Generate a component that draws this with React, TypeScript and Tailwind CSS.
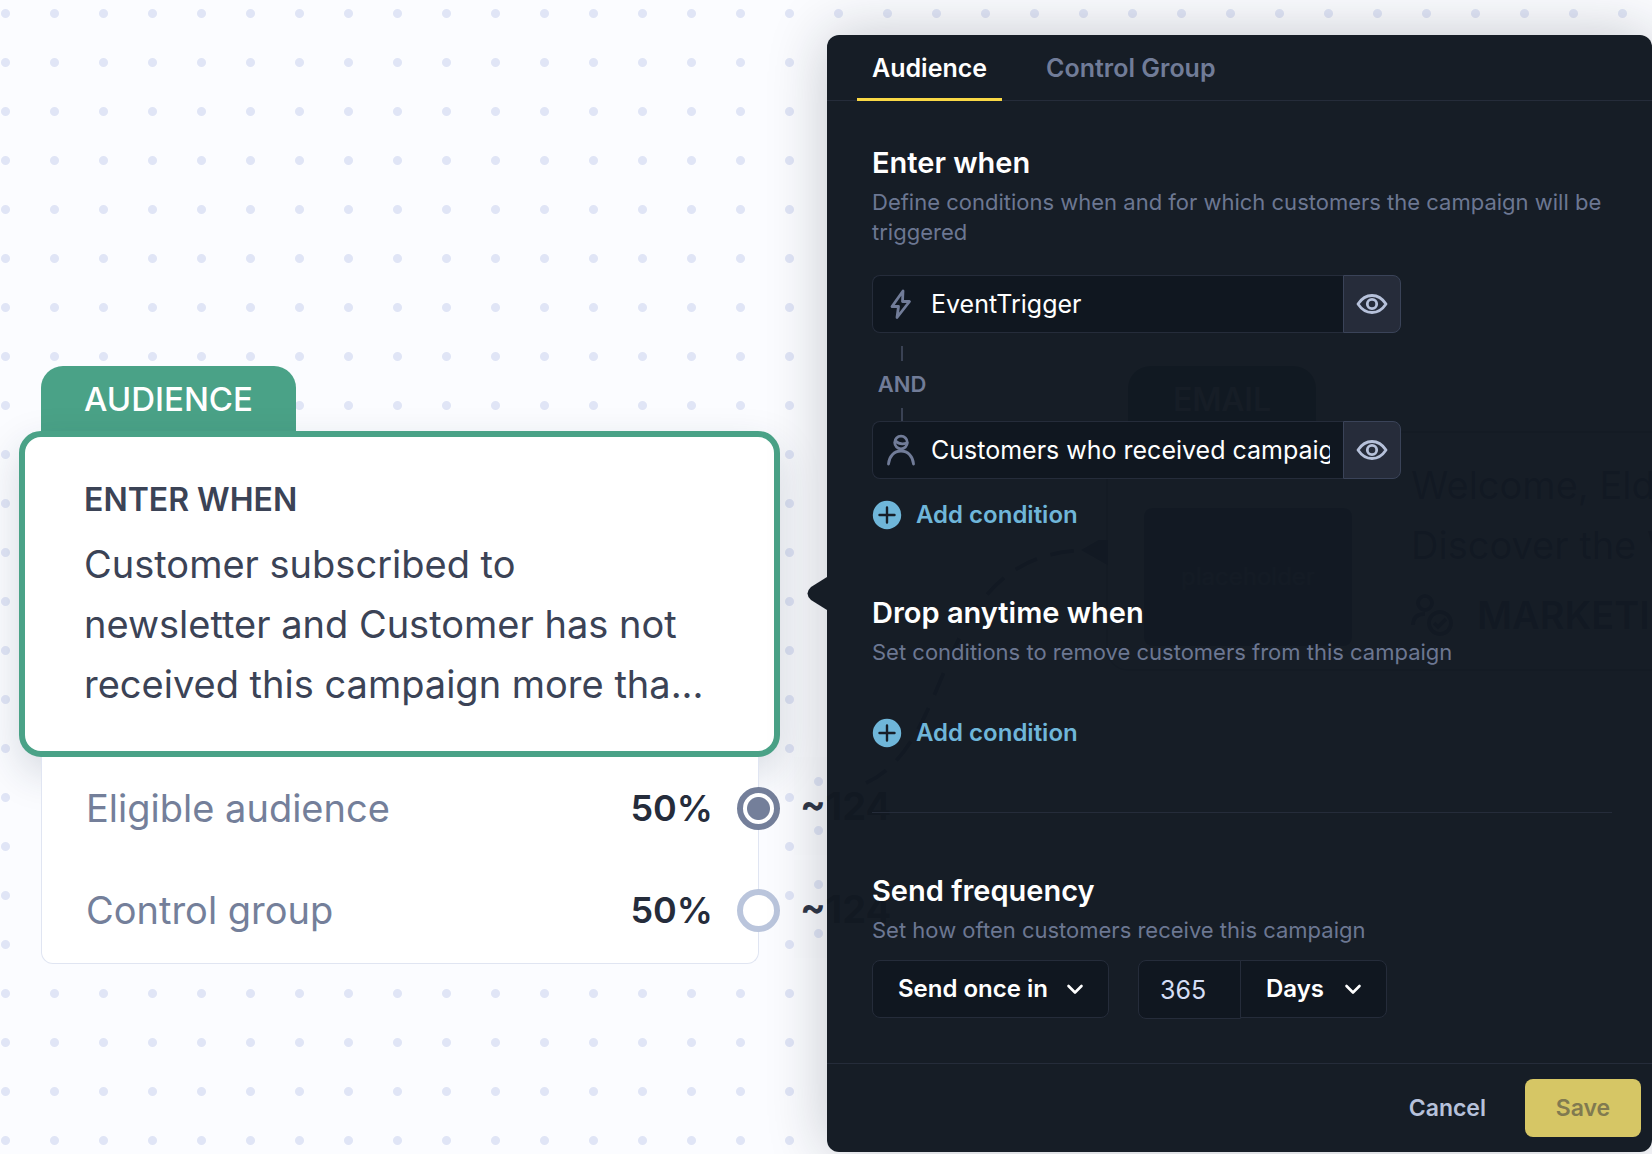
import type { ReactNode } from "react";

const dots =
  "bg-[radial-gradient(circle_at_center,#e0e5f6_4px,transparent_5px)] bg-[length:49px_49px]";

function EyeButton({ label }: { label: string }) {
  return (
    <button
      type="button"
      aria-label={label}
      className="flex w-[58px] shrink-0 items-center justify-center rounded-r-lg border border-[#3a4358] bg-[#262c3a]"
    >
      <svg width="32" height="32" viewBox="0 0 32 32" fill="none" stroke="#b6c1da" strokeWidth="2.8">
        <path d="M2 16C5.500 10.700 10.500 7.500 16 7.500S26.500 10.700 30 16C26.500 21.300 21.500 24.500 16 24.500S5.500 21.300 2 16Z" strokeLinejoin="round" />
        <circle cx="16" cy="16" r="4.700" />
      </svg>
    </button>
  );
}

function BoltIcon() {
  return (
    <svg width="30" height="32" viewBox="0 0 30 32" fill="none" stroke="#717c98" strokeWidth="2.8" strokeLinejoin="round" strokeLinecap="round">
      <path d="M17 3L6 18.500H12.500L11 29.500L23.500 13.500H16.500L17 3Z" />
    </svg>
  );
}

function PersonIcon() {
  return (
    <svg width="30" height="32" viewBox="0 0 30 32" fill="none" stroke="#717c98" strokeWidth="2.8" strokeLinecap="round">
      <circle cx="15" cy="8.500" r="6.300" />
      <path d="M9.500 7C12 9.500 16.500 10.500 21 9" />
      <path d="M2.500 30C3 22.500 8 17 15 17S27 22.500 27.500 30" />
    </svg>
  );
}

function Chevron() {
  return (
    <svg width="18" height="18" viewBox="0 0 18 18" fill="none" stroke="#ffffff" strokeWidth="2.6" strokeLinecap="round" strokeLinejoin="round" className="pointer-events-none absolute right-[25px] top-5">
      <path d="M2.500 6L9 12.500L15.500 6" />
    </svg>
  );
}

function ConditionField({ icon, label, value }: { icon: ReactNode; label: string; value: string }) {
  return (
    <div className="flex h-[58px] w-full max-w-[529px]">
      <label className="flex min-w-0 flex-1 items-center gap-[15px] rounded-l-lg border border-r-0 border-[#252c3a] bg-[#101720] pl-[13px] pr-[13px]">
        {icon}
        <input
          aria-label={label}
          defaultValue={value}
          className="h-full min-w-0 flex-1 bg-transparent text-[25px] text-white outline-none"
        />
      </label>
      <EyeButton label={`Preview ${label}`} />
    </div>
  );
}

function AddCondition() {
  return (
    <button type="button" className="flex h-8 items-center gap-[14px] text-[24px] font-semibold text-[#6fb6d9]">
      <svg width="30" height="30" viewBox="0 0 30 30">
        <circle cx="15" cy="15" r="14.200" fill="#6fb6d9" />
        <path d="M15 7.500V22.500M7.500 15H22.500" stroke="#171e28" strokeWidth="2.4" strokeLinecap="round" />
      </svg>
      Add condition
    </button>
  );
}

function SectionHead({ title, text }: { title: string; text: string }) {
  return (
    <div>
      <h2 className="text-[29px] leading-10 font-semibold text-white">{title}</h2>
      <p className="mt-1 text-[22px] leading-[30px] text-[#6c7792]">{text}</p>
    </div>
  );
}

function SplitRow({ label, checked }: { label: string; checked?: boolean }) {
  return (
    <label className="flex h-[102px] items-center">
      <span className="flex-1 text-[38px] text-[#747f9a]">{label}</span>
      <span className="text-[36px] font-semibold text-[#252c3b]">50%</span>
      <input
        type="radio"
        name="split"
        defaultChecked={checked}
        className="-mr-[22px] ml-6 h-[43px] w-[43px] appearance-none rounded-full border-[6px] border-[#bac5dc] bg-white checked:border-[#747f9a] checked:bg-[radial-gradient(circle_at_center,#747f9a_11px,#ffffff_12px)]"
      />
    </label>
  );
}

function AudienceNode() {
  return (
    <section className="absolute left-[19px] top-[366px] w-[761px]">
      <div className="ml-[22px] flex h-[65px] w-[255px] items-center justify-center rounded-t-[22px] bg-[#4aa287] pt-0.5 text-[33px] font-medium text-white">
        AUDIENCE
      </div>
      <div className="h-[326px] rounded-[22px] border-[6px] border-[#4aa287] bg-white pl-[59px] pt-[42px] text-[#3b4356] shadow-[0_16px_40px_rgba(30,50,70,0.17)]">
        <h3 className="text-[32px] leading-[42px] font-semibold">ENTER WHEN</h3>
        <p className="mt-[13px] text-[38px] leading-[60px] whitespace-pre-line">
          {"Customer subscribed to\nnewsletter and Customer has not\nreceived this campaign more tha..."}
        </p>
      </div>
      <div className="relative mr-[21px] ml-[22px] rounded-b-xl border border-t-0 border-[#e0e5f2] bg-white pb-0.5 pl-11">
        <SplitRow label="Eligible audience" checked />
        <SplitRow label="Control group" />
      </div>
    </section>
  );
}

function EmailNode() {
  return (
    <section className="absolute left-[1106px] top-[366px] w-[760px]">
      <div className="ml-[22px] flex h-[65px] w-[188px] items-center justify-center rounded-t-[22px] bg-[#24443a] pt-0.5 text-[32px] font-medium text-white">
        EMAIL
      </div>
      <div className="flex h-[240px] items-start gap-[59px] rounded-[22px] border-2 border-[#8a94a8] bg-white pl-[36px] pt-[22px]">
        <div className="mt-[53px] flex h-[138px] w-[208px] items-center justify-center rounded-lg bg-[#4a5570] text-[24px] text-[#9aa3b5]">
          placeholder
        </div>
        <div className="text-[38px] leading-[60px] whitespace-nowrap text-[#3b4356]">
          <p>Welcome, Eld</p>
          <p>Discover the W</p>
          <p className="mt-[10px] flex items-center gap-6 font-semibold">
            <svg width="42" height="42" viewBox="0 0 42 42" fill="none" stroke="#3b4356" strokeWidth="4">
              <circle cx="14" cy="9" r="7" />
              <path d="M2 31C2 24 6 20 14 20" />
              <circle cx="29" cy="29" r="11" />
              <path d="M23 29L27 33L35 25" />
            </svg>
            MARKETING
          </p>
        </div>
      </div>
    </section>
  );
}

function Estimate({ className }: { className: string }) {
  return (
    <div className={`absolute left-[794px] h-[98px] w-[110px] bg-[#fafbfe] bg-[position:0px_0px] pl-[6px] text-[38px] leading-[98px] font-bold text-[#2f3647] ${dots} ${className}`}>
      ~124
    </div>
  );
}

export default function App() {
  return (
    <main className="relative flex min-h-screen justify-end overflow-hidden bg-[#fbfcff] font-['Inter',sans-serif]">
      <div className={`absolute inset-0 bg-[position:-19px_-11px] ${dots}`}>
        <Estimate className="top-[757px]" />
        <Estimate className="top-[860px]" />
        <AudienceNode />
        <EmailNode />
        <svg className="absolute left-[780px] top-[540px]" width="330" height="280" viewBox="0 0 330 280" fill="none" stroke="#3b4356" strokeWidth="4">
          <path d="M86 243C180 200 150 15 305 10" strokeDasharray="24 14" />
          <path d="M305 10L326 -2V22Z" fill="#3b4356" />
        </svg>
      </div>

      <aside className="relative mt-[35px] mb-[2px] flex w-[calc(50%-1px)] flex-col rounded-xl bg-[#111822]/98 shadow-[0_0_60px_rgba(20,28,40,0.24)]">
        <svg className="absolute -left-5 top-[542px]" width="20" height="34" viewBox="0 0 20 34">
          <path d="M20 0L4 10Q-3 16.500 4 23L20 33Z" fill="#161d26" />
        </svg>
        <nav className="flex h-[66px] gap-[29px] border-b border-[#252c3a] pl-[30px] text-[25px] font-semibold">
          <button type="button" className="-mb-px border-b-[3px] border-[#f9d845] px-[15px] pt-1 text-white">Audience</button>
          <button type="button" className="px-[15px] pt-0.5 text-[#717c98]">Control Group</button>
        </nav>

        <div className="flex-1 pt-[42px] pr-10 pl-[45px]">
          <SectionHead title="Enter when" text="Define conditions when and for which customers the campaign will be triggered" />
          <div className="mt-7">
            <ConditionField icon={<BoltIcon />} label="Event" value="EventTrigger" />
            <div className="flex h-[88px] w-[60px] flex-col items-center justify-between pt-[13px] text-[22px] font-semibold text-[#717c98]">
              <span className="h-[15px] w-[2px] bg-[#3a4254]" />
              <span className="pb-0.5 leading-7">AND</span>
              <span className="h-[13px] w-[2px] bg-[#3a4254]" />
            </div>
            <ConditionField icon={<PersonIcon />} label="Customers" value="Customers who received campaign newsletter" />
          </div>
          <div className="mt-5">
            <AddCondition />
          </div>
          <div className="mt-[62px]">
            <SectionHead title="Drop anytime when" text="Set conditions to remove customers from this campaign" />
          </div>
          <div className="mt-[50px]">
            <AddCondition />
          </div>
          <hr className="mt-[63px] border-[#252c3a]" />
          <div className="mt-[58px]">
            <SectionHead title="Send frequency" text="Set how often customers receive this campaign" />
          </div>
          <div className="mt-[15px] flex items-start gap-[29px]">
            <div className="relative h-[58px] w-[237px]">
              <select aria-label="Frequency" className="h-full w-full appearance-none rounded-lg border border-[#252c3a] bg-[#101720] pl-[25px] text-[24px] font-semibold text-white">
                <option>Send once in</option>
              </select>
              <Chevron />
            </div>
            <div className="flex items-start">
              <input aria-label="Interval" defaultValue="365" className="h-[59px] w-[103px] rounded-l-lg border border-[#252c3a] bg-[#101720] pt-px pl-[21px] text-[25px] text-[#d5def5]" />
              <div className="relative -ml-px h-[58px] w-[147px]">
                <select aria-label="Unit" className="h-full w-full appearance-none rounded-r-lg border border-[#252c3a] bg-[#101720] pl-[25px] text-[24px] font-semibold text-white">
                  <option>Days</option>
                </select>
                <Chevron />
              </div>
            </div>
          </div>
        </div>

        <footer className="mt-10 flex h-[89px] items-center justify-end gap-[39px] border-t border-[#252c3a] pr-[11px] text-[23px] font-semibold">
          <button type="button" className="text-[#b6c1da]">Cancel</button>
          <button type="button" disabled className="h-[58px] w-[116px] rounded-lg bg-[#d6c665] text-[#817a50]">Save</button>
        </footer>
      </aside>
    </main>
  );
}
